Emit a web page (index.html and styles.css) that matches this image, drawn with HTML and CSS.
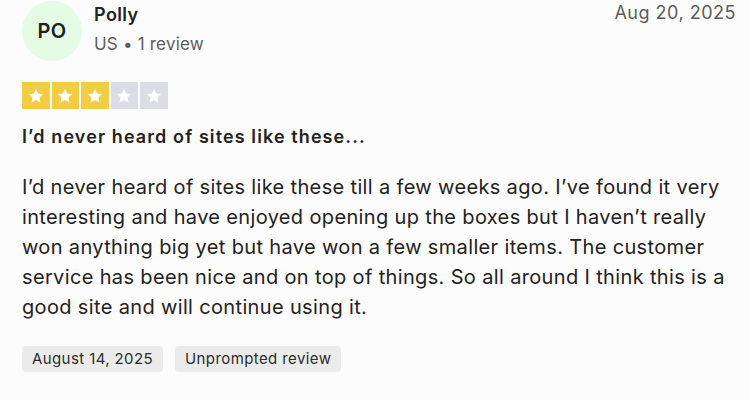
FILE: index.html
```html
<!DOCTYPE html>
<html lang="en">
<head>
    <meta charset="UTF-8">
    <meta name="viewport" content="width=device-width, initial-scale=1.0">
    <title>Review</title>
    <link rel="stylesheet" href="styles.css">
</head>
<body>
    <article class="review">
        <header class="review-header">
            <div class="consumer">
                <div class="avatar">PO</div>
                <div class="consumer-info">
                    <div class="consumer-name">Polly</div>
                    <div class="consumer-meta">US &bull; 1 review</div>
                </div>
            </div>
            <time class="review-date">Aug 20, 2025</time>
        </header>

        <div class="stars">
            <span class="star on"><svg viewBox="0 0 24 24"><path d="M12 3.5l2.6 5.6 6 .6-4.5 4.1 1.3 6-5.4-3.1-5.4 3.1 1.3-6L3.4 9.7l6-.6z"/></svg></span>
            <span class="star on"><svg viewBox="0 0 24 24"><path d="M12 3.5l2.6 5.6 6 .6-4.5 4.1 1.3 6-5.4-3.1-5.4 3.1 1.3-6L3.4 9.7l6-.6z"/></svg></span>
            <span class="star on"><svg viewBox="0 0 24 24"><path d="M12 3.5l2.6 5.6 6 .6-4.5 4.1 1.3 6-5.4-3.1-5.4 3.1 1.3-6L3.4 9.7l6-.6z"/></svg></span>
            <span class="star"><svg viewBox="0 0 24 24"><path d="M12 3.5l2.6 5.6 6 .6-4.5 4.1 1.3 6-5.4-3.1-5.4 3.1 1.3-6L3.4 9.7l6-.6z"/></svg></span>
            <span class="star"><svg viewBox="0 0 24 24"><path d="M12 3.5l2.6 5.6 6 .6-4.5 4.1 1.3 6-5.4-3.1-5.4 3.1 1.3-6L3.4 9.7l6-.6z"/></svg></span>
        </div>

        <h2 class="review-title">I’d never heard of sites like these...</h2>

        <p class="review-text">I’d never heard of sites like these till a few weeks ago. I’ve found it very interesting and have enjoyed opening up the boxes but I haven’t really won anything big yet but have won a few smaller items. The customer service has been nice and on top of things. So all around I think this is a good site and will continue using it.</p>

        <div class="tags">
            <span class="tag">August 14, 2025</span>
            <span class="tag">Unprompted review</span>
        </div>
    </article>
</body>
</html>
```

FILE: styles.css
```css
* {
    margin: 0;
    padding: 0;
    box-sizing: border-box;
}

body {
    background: #fcfcfc;
    font-family: 'Inter', 'Liberation Sans', sans-serif;
    color: #222;
}

.review {
    padding: 0 14px 0 22px;
}

.review-header {
    display: flex;
    justify-content: space-between;
    align-items: flex-start;
}

.consumer {
    display: flex;
    align-items: flex-start;
    gap: 12px;
}

.avatar {
    width: 60px;
    height: 60px;
    margin-top: 1px;
    border-radius: 50%;
    background: #e4fbe4;
    display: flex;
    align-items: center;
    justify-content: center;
    font-size: 20px;
    font-weight: 600;
    letter-spacing: 0.3px;
    color: #222;
}

.consumer-info {
    padding-top: 3px;
}

.consumer-name {
    font-size: 18px;
    font-weight: 600;
    line-height: 24px;
    letter-spacing: 0.4px;
}

.consumer-meta {
    margin-top: 6px;
    font-size: 17px;
    color: #5c5c5c;
    line-height: 22px;
    letter-spacing: 0.2px;
}

.review-date {
    margin-top: 2px;
    font-size: 18px;
    color: #5c5c5c;
    letter-spacing: 0.5px;
}

.stars {
    display: flex;
    gap: 2px;
    margin-top: 21px;
}

.star {
    width: 27.5px;
    height: 27px;
    background: #dcdce6;
    display: flex;
    align-items: center;
    justify-content: center;
}

.star.on {
    background: #f2cd41;
}

.star svg {
    width: 20px;
    height: 20px;
    fill: #fff;
}

.review-title {
    margin-top: 16px;
    font-size: 18px;
    font-weight: 600;
    line-height: 24px;
    letter-spacing: 1.1px;
}

.review-text {
    margin-top: 23px;
    font-size: 20px;
    line-height: 30px;
    letter-spacing: 0.35px;
}

.tags {
    display: flex;
    gap: 12px;
    margin-top: 24px;
}

.tag {
    background: #ebebeb;
    border-radius: 4px;
    padding: 3px 10px;
    font-size: 15px;
    line-height: 20px;
    letter-spacing: 0.4px;
    color: #2c2c2c;
}
```
